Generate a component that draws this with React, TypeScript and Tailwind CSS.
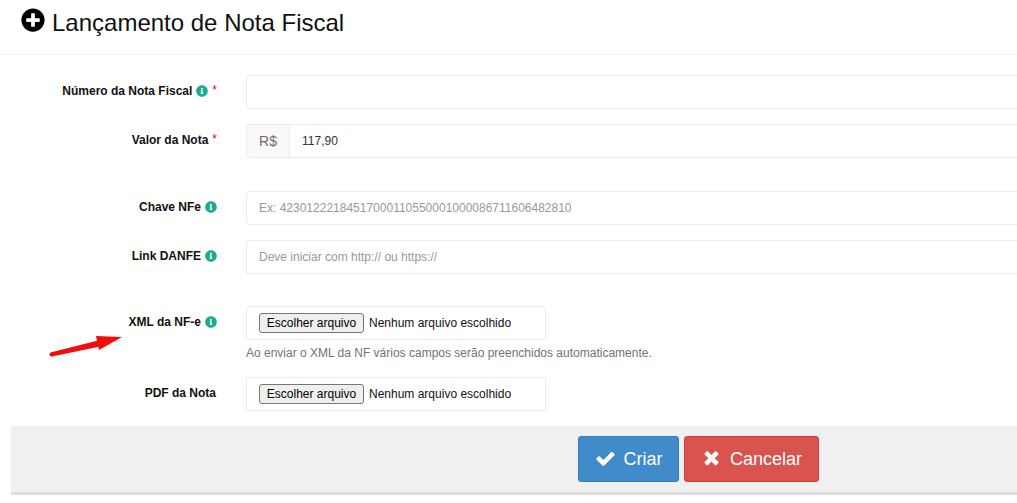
import React from "react";
import { FaPlusCircle, FaInfoCircle } from "react-icons/fa";

const Info = () => <FaInfoCircle className="text-[#1bab8e] text-[12px] shrink-0" />;
const Req = () => <span className="text-[#f00] text-[12px] font-normal ml-[4px] relative -top-[1px]">*</span>;

function Label({ text, info, req }: { text: string; info?: boolean; req?: boolean }) {
  return (
    <div className={`w-[246px] shrink-0 flex items-start justify-end pt-[8px] text-[12px] leading-[17px] font-bold text-[#111] ${info || req ? "pr-[29px]" : "pr-[30px]"}`}>
      <span>{text}</span>
      {info && <span className="ml-[4px] mt-[2px]"><Info /></span>}
      {req && <Req />}
    </div>
  );
}

function FileBox() {
  return (
    <div className="w-[300px] h-[34px] border border-[#eeede8] rounded-[3px] flex items-center pl-[12px] text-[12px] text-[#111]">
      <span className="h-[20px] w-[105px] flex items-center justify-center border border-[#767676] rounded-[3px] bg-[#efefef] text-black">Escolher arquivo</span>
      <span className="ml-[5px]">Nenhum arquivo escolhido</span>
    </div>
  );
}

export default function App() {
  return (
    <div className="relative w-[1017px] h-[503px] overflow-hidden bg-white font-['Liberation_Sans',Arial,sans-serif]">
      <div className="h-[55px] border-b border-[#eeeeee] pl-[21px] pt-[8px] flex items-start gap-[7px]">
        <FaPlusCircle className="text-[24px] text-black" />
        <h1 className="text-[24px] leading-[30px] text-[#111] font-normal">Lançamento de Nota Fiscal</h1>
      </div>

      <div className="pt-[20px]">
        <div className="flex h-[34px]">
          <Label text="Número da Nota Fiscal" info req />
          <div className="flex-1 border border-r-0 border-[#eeede8] rounded-l-[3px]" />
        </div>
        <div className="flex h-[34px] mt-[15px]">
          <Label text="Valor da Nota" req />
          <div className="flex-1 flex border border-r-0 border-[#eeede8] rounded-l-[3px] text-[12px]">
            <div className="w-[43px] bg-[#f9f9f9] border-r border-[#eeede8] flex items-center justify-center text-[14px] text-[#7a6a5e]">R$</div>
            <div className="pl-[12px] flex items-center text-[#333]">117,90</div>
          </div>
        </div>
        <div className="flex h-[34px] mt-[33px]">
          <Label text="Chave NFe" info />
          <div className="flex-1 flex items-center pl-[12px] border border-r-0 border-[#eeede8] rounded-l-[3px] text-[12px] text-[#999]">Ex: 42301222184517000110550001000086711606482810</div>
        </div>
        <div className="flex h-[34px] mt-[15px]">
          <Label text="Link DANFE" info />
          <div className="flex-1 flex items-center pl-[12px] border border-r-0 border-[#eeede8] rounded-l-[3px] text-[12px] text-[#999]">Deve iniciar com http:// ou https://</div>
        </div>
        <div className="flex mt-[32px]">
          <Label text="XML da NF-e" info />
          <div>
            <FileBox />
            <p className="mt-[5px] text-[12px] leading-[17px] text-[#737373]">Ao enviar o XML da NF vários campos serão preenchidos automaticamente.</p>
          </div>
        </div>
        <div className="flex mt-[15px]">
          <Label text="PDF da Nota" />
          <FileBox />
        </div>
      </div>

      <div className="ml-[11px] mt-[15px] h-[69px] bg-[#f0f0f0] border-b-[3px] border-[#dddddd] flex justify-start pl-[567px] pt-[10px] gap-[5px]">
        <button className="h-[46px] w-[101px] rounded-[3px] bg-[#428bca] border border-[#357ebd] text-white text-[18px] flex items-center justify-center gap-[8px]">
          <svg className="w-[21px] h-[21px] mb-[2px]" viewBox="0 0 1792 1792" fill="currentColor">
            <path d="M1671 566q0 40-28 68l-724 724-136 136q-28 28-68 28t-68-28l-136-136-362-362q-28-28-28-68t28-68l136-136q28-28 68-28t68 28l294 295 656-657q28-28 68-28t68 28l136 136q28 28 28 68z" />
          </svg>
          Criar
        </button>
        <button className="h-[46px] w-[135px] rounded-[3px] bg-[#d9534f] border border-[#d43f3a] text-white text-[18px] flex items-center justify-center gap-[8px]">
          <svg className="w-[21px] h-[21px] mb-[4px]" viewBox="0 0 1792 1792" fill="currentColor">
            <path d="M1490 1322q0 40-28 68l-136 136q-28 28-68 28t-68-28l-294-294-294 294q-28 28-68 28t-68-28l-136-136q-28-28-28-68t28-68l294-294-294-294q-28-28-28-68t28-68l136-136q28-28 68-28t68 28l294 294 294-294q28-28 68-28t68 28l136 136q28 28 28 68t-28 68l-294 294 294 294q28 28 28 68z" />
          </svg>
          Cancelar
        </button>
      </div>

      <svg className="absolute left-[48px] top-[332px]" width="78" height="26" viewBox="0 0 78 26">
        <polygon points="2.5,20.5 50,8.5 52,14.5 4,24.5" fill="#f20d0d" />
        <circle cx="3.5" cy="22.5" r="2" fill="#f20d0d" />
        <polygon points="48,4 74,5 51,18" fill="#f20d0d" />
      </svg>
    </div>
  );
}
